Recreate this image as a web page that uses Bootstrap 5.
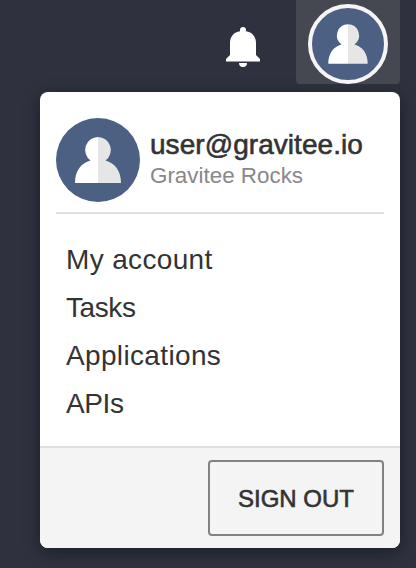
<!DOCTYPE html>
<html lang="en">
<head>
<meta charset="utf-8">
<meta name="viewport" content="width=device-width, initial-scale=1">
<title>Gravitee</title>
<link href="https://cdn.jsdelivr.net/npm/bootstrap@5.3.0/dist/css/bootstrap.min.css" rel="stylesheet">
<style>
body{background:#2f323e;font-family:"Liberation Sans",Arial,sans-serif;color:#333;height:568px}
.topbar{height:92px;padding-right:16px}
.bell{width:34px;height:40px;margin:27px 36px 0 0}
.user-toggle{width:104px;height:84px;background:#454851;border-radius:0 0 4px 4px;padding:4px 0 0}
.user-toggle svg{width:80px;height:80px;border:4px solid #f5f5f5}
.avatar{background:#4c6083}
.user-menu{width:360px;height:456px;margin-left:40px;border-radius:8px;box-shadow:0 4px 16px rgba(10,20,25,.6)}
.profile{height:122px;margin:0 16px;padding-top:26px;border-bottom:2px solid #e0e0e0}
.profile svg{width:84px;height:84px;margin-right:10px}
.mail{font-size:28px;line-height:32px;margin-top:11px;letter-spacing:.05px;-webkit-text-stroke:.6px #333}
.org{font-size:22.400px;line-height:30px;color:#888}
.links{padding:22px 26px 0}
.links a{font-size:28px;line-height:48px;letter-spacing:.35px;color:#333;padding:0}
.links .tight{letter-spacing:-.4px}
.menu-foot{height:102px;background:#f4f4f4;border-top:2px solid #e0e0e0;padding:12px 16px 0;border-radius:0 0 8px 8px}
.sign-out{width:176px;height:76px;padding:2px 0 0;border:2px solid #828282;border-radius:4px;font-size:24px;color:#333;-webkit-text-stroke:.6px #333}
</style>
<script src="https://cdn.jsdelivr.net/npm/bootstrap@5.3.0/dist/js/bootstrap.bundle.min.js"></script>
</head>
<body class="overflow-hidden">
<svg width="0" height="0" class="d-none"><symbol id="person" viewBox="0 0 84 84">
<path fill="#fff" d="M42 19a13 13 0 0 0-7.500 23.500C25 45 19 53 19 65H42Z"/>
<path fill="#e6e6e6" d="M42 19a13 13 0 0 1 7.500 23.500C59 45 65 53 65 65H42Z"/>
</symbol></svg>
<header class="topbar d-flex justify-content-end align-items-start">
<svg class="bell" viewBox="0 0 34 40" fill="#fff"><path d="M17 0c1.800 0 3 1.300 3 3v1.200c6 .8 10 5.300 10 11.800V28l4 4v2.500H0V32l4-4V16c0-6.500 4-11 10-11.800V3c0-1.700 1.200-3 3-3ZM13 36h8a4 4 0 0 1-8 0Z"/></svg>
<button class="user-toggle btn border-0 d-flex justify-content-center" aria-label="User menu"><svg class="avatar rounded-circle"><use href="#person"/></svg></button>
</header>
<div class="user-menu bg-white d-flex flex-column">
<div class="profile d-flex align-items-start">
<svg class="avatar rounded-circle flex-shrink-0"><use href="#person"/></svg>
<div><div class="mail">user@gravitee.io</div><div class="org">Gravitee Rocks</div></div>
</div>
<nav class="links nav flex-column"><a class="nav-link" href="#">My account</a><a class="nav-link tight" href="#">Tasks</a><a class="nav-link" href="#">Applications</a><a class="nav-link tight" href="#">APIs</a></nav>
<div class="menu-foot mt-auto d-flex justify-content-end"><button class="sign-out btn">SIGN OUT</button></div>
</div>
</body>
</html>
